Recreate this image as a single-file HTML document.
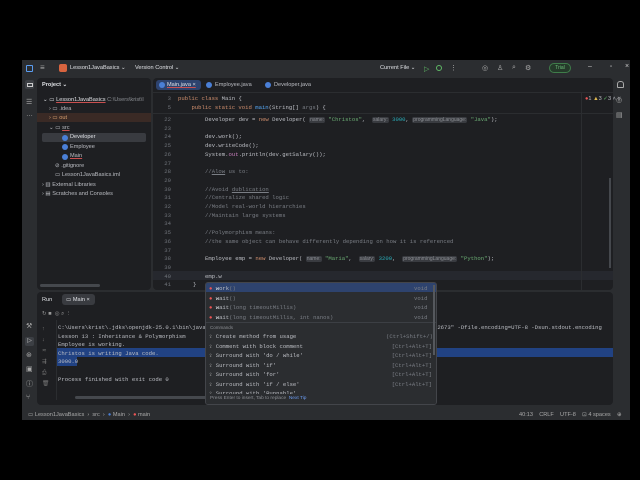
<!DOCTYPE html>
<html><head><meta charset="utf-8"><style>
*{margin:0;padding:0;box-sizing:border-box}
body{width:640px;height:480px;background:#000;position:relative;overflow:hidden;font-family:"Liberation Sans",sans-serif;color:#bcbec4}
.a{position:absolute;white-space:pre}
.m{font-family:"Liberation Mono",monospace;font-size:5.6px}
.s{font-size:5.6px}
.win{position:absolute;left:22px;top:60px;width:608px;height:360px;background:#2b2d30}
.isl{position:absolute;background:#1e1f22;border-radius:4px}
.kw{color:#cf8e6d}.st{color:#6aab73}.nm{color:#2aacb8}.cm{color:#7a7e85}.fn{color:#56a8f5}.pu{color:#c77dbb}
.hint{background:#393b40;color:#8c8f94;border-radius:2px;padding:0 1px;font-family:"Liberation Sans",sans-serif;font-size:5px}
.ln{color:#6f737a}
.ic{position:absolute;width:6px;height:6px;border-radius:50%}
</style></head><body>
<div class="win">
 <div class="a" style="left:4px;top:5px;width:7px;height:7px;border:1.5px solid #5a9cf0;border-radius:1px"></div>
 <div class="a s" style="left:18px;top:3px;font-size:8px;color:#aaa">≡</div>
 <div class="a" style="left:37px;top:4px;width:8px;height:8px;background:#d8643f;border-radius:2px"></div>
 <div class="a s" style="left:48px;top:5px;color:#dfe1e5">Lesson1JavaBasics ⌄</div>
 <div class="a s" style="left:113px;top:5px;color:#dfe1e5">Version Control ⌄</div>
 <div class="a s" style="left:358px;top:5px;color:#dfe1e5">Current File ⌄</div>
 <div class="a" style="left:402px;top:5px;color:#5fb865;font-size:7px">▷</div>
 <div class="a" style="left:414px;top:5px;width:6px;height:6px;border:1.5px solid #5fb865;border-radius:50%"></div>
 <div class="a" style="left:428px;top:4px;color:#aaa;font-size:7px">⋮</div>
 <div class="a" style="left:460px;top:4px;color:#aaa;font-size:7px">◎</div>
 <div class="a" style="left:475px;top:4px;color:#aaa;font-size:7px">♙</div>
 <div class="a" style="left:490px;top:4px;color:#aaa;font-size:7px">⌕</div>
 <div class="a" style="left:503px;top:4px;color:#aaa;font-size:7px">⚙</div>
 <div class="a" style="left:527px;top:3px;width:22px;height:10px;border:1px solid #3f7d4a;border-radius:5px;background:#253a2a;color:#6cbf7a;font-size:5px;text-align:center;line-height:8px">Trial</div>
 <div class="a" style="left:566px;top:3px;color:#ccc;font-size:7px">–</div>
 <div class="a" style="left:588px;top:4px;color:#ccc;font-size:6px">▫</div>
 <div class="a" style="left:603px;top:3px;color:#ccc;font-size:7px">×</div>
 <div class="a" style="left:3px;top:20px;width:9px;height:9px;background:#3c3f44;border-radius:2px"></div>
 <div class="a" style="left:5px;top:23px;width:6px;height:4px;border:1px solid #ccc"></div>
 <div class="a" style="left:4px;top:38px;color:#aaa;font-size:7px">☰</div>
 <div class="a" style="left:4px;top:51px;color:#aaa;font-size:7px">…</div>
 <div class="a" style="left:4px;top:262px;color:#aaa;font-size:7px">⚒</div>
 <div class="a" style="left:3px;top:277px;width:9px;height:9px;background:#3c3f44;border-radius:2px;color:#ccc;font-size:6px;text-align:center">▷</div>
 <div class="a" style="left:4px;top:291px;color:#aaa;font-size:7px">⊛</div>
 <div class="a" style="left:4px;top:305px;color:#aaa;font-size:7px">▣</div>
 <div class="a" style="left:4px;top:319px;color:#aaa;font-size:7px">ⓘ</div>
 <div class="a" style="left:4px;top:334px;color:#aaa;font-size:7px">⑂</div>
 <div class="a" style="left:595px;top:21px;width:7px;height:7px;border:1px solid #aaa;border-radius:3px 3px 1px 1px"></div>
 <div class="a" style="left:594px;top:36px;color:#aaa;font-size:7px">◎</div>
 <div class="a" style="left:594px;top:51px;color:#aaa;font-size:7px">▤</div>

 <div class="isl" style="left:15px;top:18px;width:114px;height:212px">
  <div class="a s" style="left:5px;top:4px;color:#dfe1e5;font-weight:bold">Project ⌄</div>
  <div class="a s" style="left:6px;top:19px;color:#dfe1e5">⌄ ▭ <span style="text-decoration:underline #c94f4f">Lesson1JavaBasics</span> <span style="color:#8c8f94">C:\Users\krist\I</span></div>
  <div class="a s" style="left:12px;top:28px">› ▭ .idea</div>
  <div class="a" style="left:0;top:35px;width:114px;height:9px;background:#3a2a25"></div>
  <div class="a s" style="left:12px;top:37px;color:#d8a070">› ▭ out</div>
  <div class="a s" style="left:12px;top:47px">⌄ ▭ <span style="text-decoration:underline #c94f4f">src</span></div>
  <div class="a" style="left:5px;top:55px;width:104px;height:9px;background:#393b40;border-radius:2px"></div>
  <div class="ic" style="left:25px;top:57px;background:#4a7fd6"></div><div class="a s" style="left:33px;top:56px;color:#dfe1e5">Developer</div>
  <div class="ic" style="left:25px;top:66px;background:#4a7fd6"></div><div class="a s" style="left:33px;top:66px">Employee</div>
  <div class="ic" style="left:25px;top:76px;background:#4a7fd6"></div><div class="a s" style="left:33px;top:75px;text-decoration:underline #c94f4f">Main</div>
  <div class="a s" style="left:18px;top:85px">⊘ .gitignore</div>
  <div class="a s" style="left:18px;top:94px">▭ Lesson1JavaBasics.iml</div>
  <div class="a s" style="left:5px;top:104px">› ▥ External Libraries</div>
  <div class="a s" style="left:5px;top:113px">› ▤ Scratches and Consoles</div>
  <div class="a" style="left:3px;top:206px;width:60px;height:3px;background:#45484d;border-radius:2px"></div>
 </div>

 <div class="isl" style="left:131px;top:18px;width:460px;height:212px">
  <div class="a" style="left:3px;top:2px;width:45px;height:10px;background:#2e436e;border-radius:3px"></div>
  <div class="ic" style="left:6px;top:4px;background:#4a7fd6"></div>
  <div class="a s" style="left:14px;top:4px;color:#dfe1e5;text-decoration:underline #c94f4f">Main.java ×</div>
  <div class="ic" style="left:53px;top:4px;background:#4a7fd6"></div><div class="a s" style="left:62px;top:4px">Employee.java</div>
  <div class="ic" style="left:112px;top:4px;background:#4a7fd6"></div><div class="a s" style="left:121px;top:4px">Developer.java</div>
  <div class="a" style="left:0;top:14px;width:460px;height:1px;background:#2b2d30"></div>
  <div class="a s" style="left:432px;top:18px"><span style="color:#e55">●</span>1 <span style="color:#e0b94f">▲</span>3 <span style="color:#5fb865">✓</span>3 ˄ ˅</div>
  <div class="a" style="left:0;top:35px;width:460px;height:1px;background:#2b2d30"></div>
  <div class="a" style="left:0;top:193px;width:460px;height:9px;background:#26282e"></div>
  <div class="a" style="left:428px;top:15px;width:1px;height:197px;background:#2b2d30"></div>
  <div class="a" style="left:456px;top:100px;width:2px;height:90px;background:#45484d"></div>
  <div class="a m ln" style="left:2px;top:17px;line-height:8.8px;width:16px;text-align:right">3
5</div>
  <div class="a m" style="left:25px;top:17px;line-height:8.8px"><span class="kw">public class</span> Main {
    <span class="kw">public static void</span> <span class="fn">main</span>(String[] <span class="cm">args</span>) {</div>
  <div class="a m ln" style="left:2px;top:38px;line-height:8.7px;width:16px;text-align:right">22
23
24
25
26
27
28
29
30
31
32
33
34
35
36
37
38
39
40
41</div>
  <div class="a m" style="left:52px;top:38px;line-height:8.7px">Developer dev = <span class="kw">new</span> Developer( <span class="hint">name:</span> <span class="st">"Christos"</span>,  <span class="hint">salary:</span> <span class="nm">3000</span>, <span class="hint">programmingLanguage:</span> <span class="st">"Java"</span>);

dev.work();
dev.writeCode();
System.<span class="pu">out</span>.println(dev.getSalary());

<span class="cm">//<u>Alow</u> us to:</span>

<span class="cm">//Avoid <u>dublication</u></span>
<span class="cm">//Centralize shared logic</span>
<span class="cm">//Model real-world hierarchies</span>
<span class="cm">//Maintain large systems</span>

<span class="cm">//Polymorphism means:</span>
<span class="cm">//the same object can behave differently depending on how it is referenced</span>

Employee emp = <span class="kw">new</span> Developer( <span class="hint">name:</span> <span class="st">"Maria"</span>,  <span class="hint">salary:</span> <span class="nm">3200</span>,  <span class="hint">programmingLanguage:</span> <span class="st">"Python"</span>);

emp.w</div>
  <div class="a m" style="left:40px;top:203px">}</div>
 </div>

 <div class="isl" style="left:15px;top:232px;width:576px;height:113px">
  <div class="a s" style="left:5px;top:5px;color:#dfe1e5">Run</div>
  <div class="a" style="left:25px;top:2px;width:33px;height:11px;background:#393b40;border-radius:3px"></div>
  <div class="a s" style="left:29px;top:5px;color:#dfe1e5">▭ Main ×</div>
  <div class="a s" style="left:5px;top:19px;color:#999">↻ ■  ◎ ⌕ ⋮</div>
  <div class="a s" style="left:5px;top:32px;color:#777;line-height:11px">↑
↓
≂
⇶
⎙
🗑︎</div>
  <div class="a" style="left:19px;top:28px;width:1px;height:80px;background:#2b2d30"></div>
  <div class="a" style="left:20px;top:56px;width:556px;height:9px;background:#214283"></div>
  <div class="a" style="left:20px;top:65px;width:20px;height:9px;background:#214283"></div>
  <div class="a m" style="left:21px;top:32px;line-height:8.6px">C:\Users\krist\.jdks\openjdk-25.0.1\bin\java.exe                                                           .jar=62673" -Dfile.encoding=UTF-8 -Dsun.stdout.encoding
Lesson 13 : Inheritance &amp; Polymorphism
Employee is working.
Christos is writing Java code.
3000.0

Process finished with exit code 0</div>
  <div class="a" style="left:38px;top:104px;width:315px;height:3px;background:#45484d;border-radius:2px"></div>
 </div>

 <div class="a" style="left:183px;top:222px;width:232px;height:123px;background:#2b2d30;border:1px solid #43454a;border-radius:3px;overflow:hidden">
  <div class="a" style="left:0;top:0;width:230px;height:9px;background:#2e436e"></div>
  <div class="a m" style="left:3px;top:1px;line-height:9.5px"><span style="color:#e55">●</span> <span style="color:#dfe1e5">w</span>ork<span class="cm">()</span>
<span style="color:#e55">●</span> <span style="color:#dfe1e5">w</span>ait<span class="cm">()</span>
<span style="color:#e55">●</span> <span style="color:#dfe1e5">w</span>ait<span class="cm">(long timeoutMillis)</span>
<span style="color:#e55">●</span> <span style="color:#dfe1e5">w</span>ait<span class="cm">(long timeoutMillis, int nanos)</span></div>
  <div class="a m cm" style="left:208px;top:1px;line-height:9.5px">void
void
void
void</div>
  <div class="a" style="left:0;top:39px;width:230px;height:1px;background:#3c3f44"></div>
  <div class="a" style="left:4px;top:42px;font-size:4.5px;color:#8c8f94">Commands</div>
  <div class="a m" style="left:3px;top:49px;line-height:9.5px"><span style="color:#ccc">♀</span> Create method from usage
<span style="color:#ccc">♀</span> Comment with block comment
<span style="color:#ccc">♀</span> Surround with 'do / while'
<span style="color:#ccc">♀</span> Surround with 'if'
<span style="color:#ccc">♀</span> Surround with 'for'
<span style="color:#ccc">♀</span> Surround with 'if / else'
<span style="color:#ccc">♀</span> Surround with 'Runnable'</div>
  <div class="a m cm" style="left:180px;top:49px;line-height:9.5px;text-align:right;width:46px">(Ctrl+Shift+/)
[Ctrl+Alt+T]
[Ctrl+Alt+T]
[Ctrl+Alt+T]
[Ctrl+Alt+T]
[Ctrl+Alt+T]</div>
  <div class="a" style="left:0;top:111px;width:230px;height:11px;background:#2b2d30"></div>
  <div class="a" style="left:4px;top:113px;font-size:4.8px;color:#8c8f94">Press Enter to insert, Tab to replace  <span style="color:#6b9bf0">Next Tip</span></div>
  <div class="a" style="left:227px;top:2px;width:2px;height:70px;background:#55585d"></div>
 </div>

 <div class="a s" style="left:6px;top:352px;color:#aaa">▭ Lesson1JavaBasics  ›  src  ›  <span style="color:#4a7fd6">●</span> Main  ›  <span style="color:#e55">●</span> main</div>
 <div class="a s" style="left:497px;top:352px;color:#aaa">40:13    CRLF    UTF-8    ⊡ 4 spaces    ⊕</div>
</div>
</body></html>
